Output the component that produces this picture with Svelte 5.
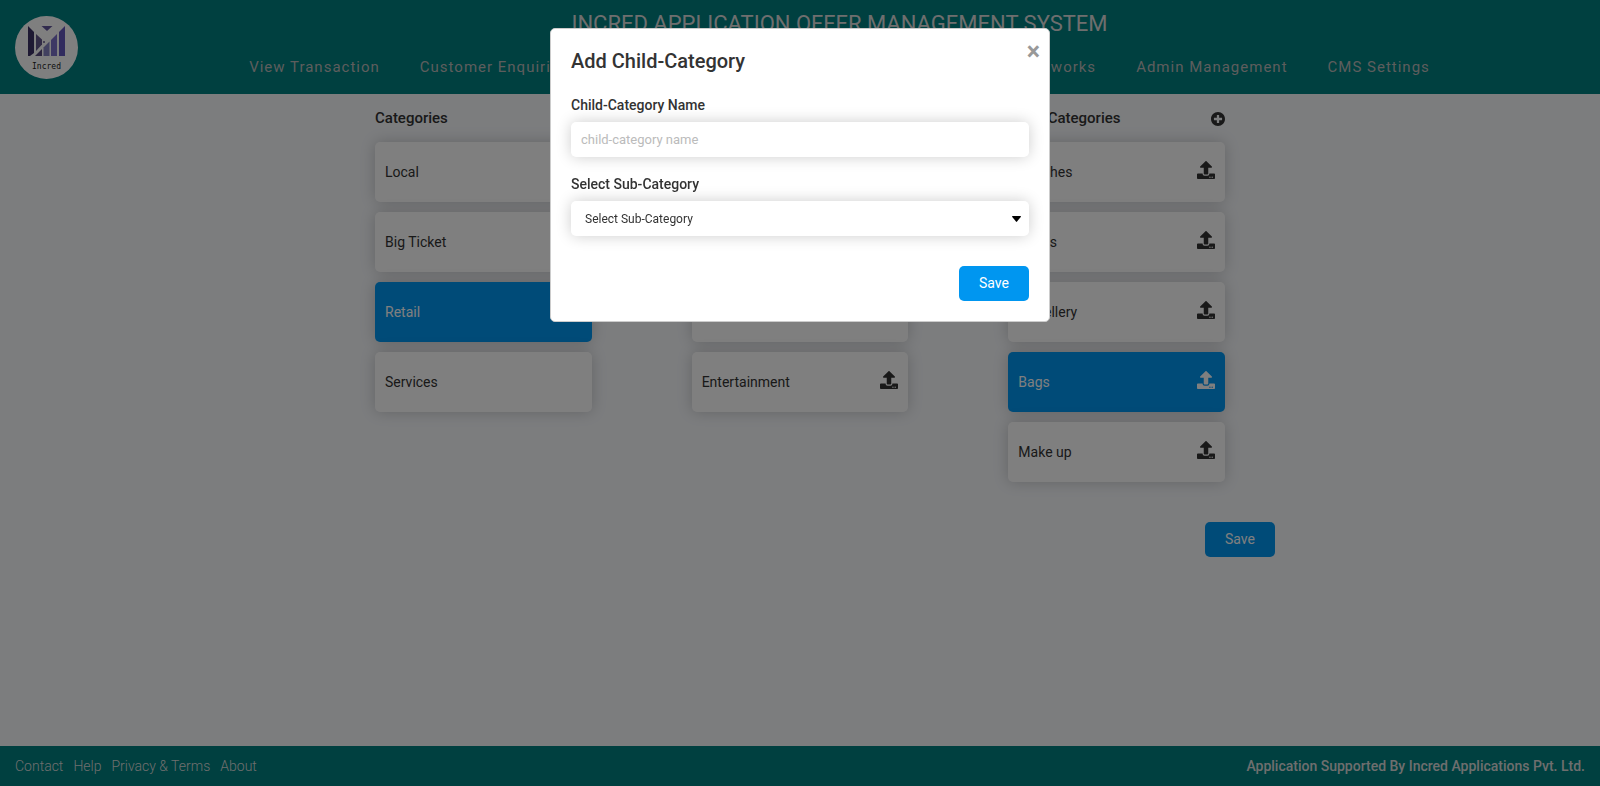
<script>
  const nav = ['View Transaction', 'Customer Enquiries', 'Offer Management', 'Merchant Payments', 'Offer Networks', 'Admin Management', 'CMS Settings'];
  const links = ['Contact', 'Help', 'Privacy & Terms', 'About'];
  const columns = [
    { title: 'Categories', items: ['Local', 'Big Ticket', 'Retail', 'Services'], active: 'Retail', upload: false },
    { title: 'Sub-Categories', items: ['Fashion', 'Food', 'Travel', 'Entertainment'], active: '', upload: true },
    { title: 'Child-Categories', items: ['Watches', 'Shoes', 'Jewellery', 'Bags', 'Make up'], active: 'Bags', upload: true }
  ];
  let name = $state('');
  let parent = $state('');
</script>

<div class="page">
  <header>
    <svg class="logo" viewBox="0 0 64 64" role="img" aria-label="Incred">
      <circle cx="31.500" cy="32.500" r="31.500" fill="#fff" />
      <path d="M13 11l6 6V38l-4 3h-2z" fill="#3c3266" />
      <path d="M21 19l6 5.500v5l-6 6.500z" fill="#63578a" />
      <path d="M26.500 11h11L32 16z" fill="#63579c" />
      <path d="M20 41l7-7v7z" fill="#584b7e" />
      <path d="M28.500 32.500l6-6V41h-6z" fill="#8582c0" />
      <path d="M36 25l6-6V41h-6z" fill="#7a70c8" />
      <path d="M44 17l6-6V41h-6z" fill="#6356bd" />
      <circle cx="29" cy="27" r="1" fill="#63578a" />
      <text x="31.500" y="54" text-anchor="middle">Incred</text>
    </svg>
    <div class="head">
      <h1>INCRED APPLICATION OFFER MANAGEMENT SYSTEM</h1>
      <nav>
        {#each nav as item}<a href="#top">{item}</a>{/each}
      </nav>
    </div>
  </header>

  <main>
    <div class="columns">
      {#each columns as col}
        <section>
          <div class="coltitle">
            <h2>{col.title}</h2>
            {#if col.upload}
              <button class="icon" aria-label="Add to {col.title}">
                <svg width="14" height="14" viewBox="8 8 496 496"><path d="M256 8C119 8 8 119 8 256s111 248 248 248 248-111 248-248S393 8 256 8zm144 276c0 6.600-5.400 12-12 12h-92v92c0 6.600-5.400 12-12 12h-56c-6.600 0-12-5.400-12-12v-92h-92c-6.600 0-12-5.400-12-12v-56c0-6.600 5.400-12 12-12h92v-92c0-6.600 5.400-12 12-12h56c6.600 0 12 5.400 12 12v92h92c6.600 0 12 5.400 12 12v56z" /></svg>
              </button>
            {/if}
          </div>
          <ul>
            {#each col.items as item}
              <li class:active={item === col.active}>
                <span>{item}</span>
                {#if col.upload}
                  <button class="icon up" aria-label="Upload for {item}">
                    <svg width="18" height="18" viewBox="0 0 512 512"><path d="M296 384h-80c-13.300 0-24-10.700-24-24V192h-87.700c-17.800 0-26.700-21.500-14.100-34.100L242.300 5.700c7.500-7.500 19.800-7.500 27.300 0l152.200 152.200c12.600 12.600 3.700 34.100-14.100 34.100H320v168c0 13.300-10.700 24-24 24zm216-8v112c0 13.300-10.700 24-24 24H24c-13.300 0-24-10.700-24-24V376c0-13.300 10.700-24 24-24h136v8c0 30.900 25.100 56 56 56h80c30.900 0 56-25.100 56-56v-8h136c13.300 0 24 10.700 24 24zm-124 88c0-11-9-20-20-20s-20 9-20 20 9 20 20 20 20-9 20-20zm64 0c0-11-9-20-20-20s-20 9-20 20 9 20 20 20 20-9 20-20z" /></svg>
                  </button>
                {/if}
              </li>
            {/each}
          </ul>
        </section>
      {/each}
    </div>
    <div class="actions"><button class="save">Save</button></div>
  </main>

  <footer>
    <div class="links">
      {#each links as link}<a href="#top">{link}</a>{/each}
    </div>
    <strong>Application Supported By Incred Applications Pvt. Ltd.</strong>
  </footer>
</div>

<div class="backdrop">
  <div class="modal" role="dialog" aria-modal="true" aria-labelledby="modal-title">
    <button class="close" aria-label="Close">×</button>
    <h3 id="modal-title">Add Child-Category</h3>
    <div class="field">
      <label for="child-name">Child-Category Name</label>
      <input id="child-name" type="text" placeholder="child-category name" bind:value={name} />
    </div>
    <div class="field">
      <label for="sub-category">Select Sub-Category</label>
      <div class="select">
        <select id="sub-category" bind:value={parent}>
          <option value="">Select Sub-Category</option>
          {#each columns[1].items as item}<option value={item}>{item}</option>{/each}
        </select>
        <svg width="9" height="6" viewBox="0 0 10 6" preserveAspectRatio="none"><path d="M.6 0h8.800q.9.200.3 1L5.600 5.600q-.6.600-1.200 0L.3 1Q-.3.200.6 0z" /></svg>
      </div>
    </div>
    <div class="modal-actions"><button class="save">Save</button></div>
  </div>
</div>

<style>
  :global(body) { margin: 0; }
  .page, .backdrop {
    font-family: Roboto, "Liberation Sans", sans-serif;
    font-size: 14px;
    color: #333;
  }
  .page, .page *, .backdrop, .backdrop * { box-sizing: border-box; }
  button, input, select { font-family: inherit; }
  h1, h2, h3, ul { margin: 0; padding: 0; }
  .page {
    min-height: 100vh;
    display: flex;
    flex-direction: column;
    background: #f8fafd;
  }
  header {
    display: flex;
    align-items: center;
    padding-left: 15px;
    background: #008080;
  }
  .logo { width: 64px; height: 64px; flex: none; }
  .logo text { font: 8px "DejaVu Sans Mono", monospace; fill: #222; }
  .head {
    flex: 1;
    display: flex;
    flex-direction: column;
    align-items: center;
    gap: 13px;
    padding: 9px 0 12px;
  }
  h1 { font-size: 22px; line-height: 30px; font-weight: 400; color: #ddd; }
  nav { display: flex; gap: 40px; }
  nav a {
    font-size: 15px;
    line-height: 30px;
    letter-spacing: 1px;
    white-space: nowrap;
    color: #bbb;
    text-decoration: none;
  }
  main {
    flex: 1;
    width: 100%;
    max-width: 950px;
    margin: 0 auto;
    padding-top: 12px;
  }
  .columns {
    display: grid;
    grid-template-columns: repeat(3, 1fr);
    gap: 100px;
    padding: 0 50px;
  }
  .coltitle {
    display: flex;
    align-items: center;
    justify-content: space-between;
    height: 26px;
    margin-bottom: 10px;
  }
  h2 { font-size: 15px; line-height: 24px; font-weight: 500; padding-bottom: 2px; }
  .icon {
    display: flex;
    padding: 0;
    border: 0;
    background: none;
    color: inherit;
    cursor: pointer;
  }
  .icon svg { fill: currentColor; }
  .up { padding-bottom: 4px; }
  ul { list-style: none; display: grid; gap: 10px; }
  li {
    display: flex;
    align-items: center;
    justify-content: space-between;
    height: 60px;
    padding: 0 10px;
    border-radius: 5px;
    background: #fff;
    box-shadow: 0 0 15px rgba(0, 0, 0, .2);
  }
  li.active { background: #0096f0; color: #fff; }
  .actions { display: flex; justify-content: flex-end; margin-top: 40px; }
  .save {
    width: 70px;
    height: 35px;
    padding: 0 0 2px;
    border: 0;
    border-radius: 5px;
    background: #0096f0;
    color: #fff;
    font-size: 14px;
    cursor: pointer;
  }
  footer {
    display: flex;
    align-items: center;
    justify-content: space-between;
    height: 40px;
    padding: 0 15px;
    background: #008080;
    color: #ddd;
  }
  .links { display: flex; gap: 10px; }
  .links a { font-weight: 300; color: #ddd; text-decoration: none; }
  strong { font-weight: 500; }
  .backdrop {
    position: fixed;
    inset: 0;
    padding-top: 28px;
    background: rgba(0, 0, 0, .5);
  }
  .modal {
    position: relative;
    width: 100%;
    max-width: 500px;
    margin: 0 auto;
    padding: 20px;
    border: 1px solid #ccc;
    border-radius: 5px;
    background: #fff;
  }
  .close {
    position: absolute;
    top: 12px;
    right: 9px;
    padding: 0;
    border: 0;
    background: none;
    color: #999;
    font-size: 25px;
    line-height: 22px;
    font-weight: 700;
    cursor: pointer;
  }
  h3 { font-size: 20px; line-height: 24px; font-weight: 500; margin-bottom: 20px; }
  .field { display: flex; flex-direction: column; gap: 5px; margin-bottom: 15px; }
  label { font-weight: 500; line-height: 24px; }
  input, select {
    width: 100%;
    height: 35px;
    border: 0;
    border-radius: 5px;
    background: #fff;
    color: #333;
    box-shadow: 0 0 15px rgba(0, 0, 0, .2);
  }
  input { padding: 0 10px; font-size: 13px; }
  input::placeholder { color: #bbb; }
  select { appearance: none; padding: 0 14px; font-size: 12px; }
  .select { display: grid; align-items: center; }
  .select select, .select svg { grid-area: 1 / 1; }
  .select svg { justify-self: end; margin-right: 8px; pointer-events: none; }
  .modal-actions { display: flex; justify-content: flex-end; padding-top: 15px; }
</style>
